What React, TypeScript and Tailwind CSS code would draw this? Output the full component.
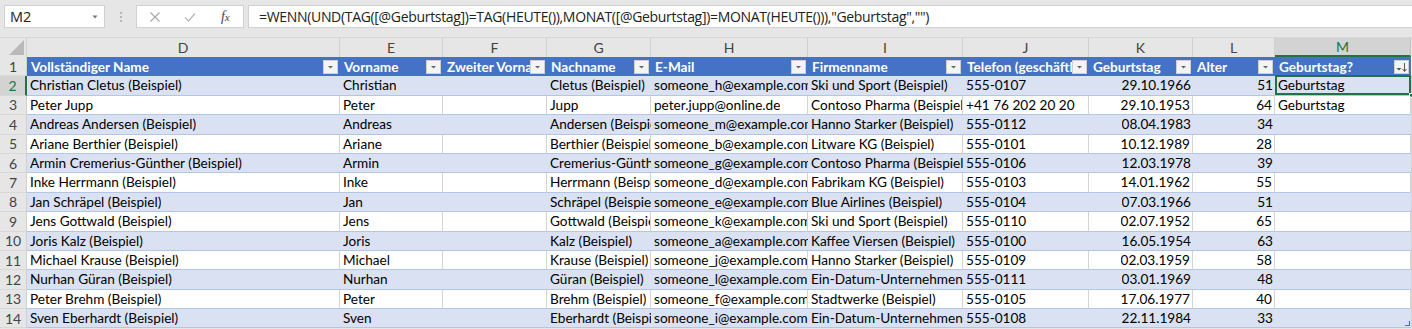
import React from "react";

type Col = { key: string; w: string; align: "l" | "r" };

const cols: Col[] = [
  { key: "D", w: "w-[313px]", align: "l" },
  { key: "E", w: "w-[103px]", align: "l" },
  { key: "F", w: "w-[104px]", align: "l" },
  { key: "G", w: "w-[104px]", align: "l" },
  { key: "H", w: "w-[157px]", align: "l" },
  { key: "I", w: "w-[155px]", align: "l" },
  { key: "J", w: "w-[126px]", align: "l" },
  { key: "K", w: "w-[104px]", align: "r" },
  { key: "L", w: "w-[82px]", align: "r" },
  { key: "M", w: "w-[136px]", align: "l" },
];

const headers = [
  "Vollständiger Name",
  "Vorname",
  "Zweiter Vorname",
  "Nachname",
  "E-Mail",
  "Firmenname",
  "Telefon (geschäftlich)",
  "Geburtstag",
  "Alter",
  "Geburtstag?",
];

const rows: string[][] = [
  ["Christian Cletus (Beispiel)", "Christian", "", "Cletus (Beispiel)", "someone_h@example.com", "Ski und Sport (Beispiel)", "555-0107", "29.10.1966", "51", "Geburtstag"],
  ["Peter Jupp", "Peter", "", "Jupp", "peter.jupp@online.de", "Contoso Pharma (Beispiel)", "+41 76 202 20 20", "29.10.1953", "64", "Geburtstag"],
  ["Andreas Andersen (Beispiel)", "Andreas", "", "Andersen (Beispiel)", "someone_m@example.com", "Hanno Starker (Beispiel)", "555-0112", "08.04.1983", "34", ""],
  ["Ariane Berthier (Beispiel)", "Ariane", "", "Berthier (Beispiel)", "someone_b@example.com", "Litware KG (Beispiel)", "555-0101", "10.12.1989", "28", ""],
  ["Armin Cremerius-Günther (Beispiel)", "Armin", "", "Cremerius-Günther (Beispiel)", "someone_g@example.com", "Contoso Pharma (Beispiel)", "555-0106", "12.03.1978", "39", ""],
  ["Inke Herrmann (Beispiel)", "Inke", "", "Herrmann (Beispiel)", "someone_d@example.com", "Fabrikam KG (Beispiel)", "555-0103", "14.01.1962", "55", ""],
  ["Jan Schräpel (Beispiel)", "Jan", "", "Schräpel (Beispiel)", "someone_e@example.com", "Blue Airlines (Beispiel)", "555-0104", "07.03.1966", "51", ""],
  ["Jens Gottwald (Beispiel)", "Jens", "", "Gottwald (Beispiel)", "someone_k@example.com", "Ski und Sport (Beispiel)", "555-0110", "02.07.1952", "65", ""],
  ["Joris Kalz (Beispiel)", "Joris", "", "Kalz (Beispiel)", "someone_a@example.com", "Kaffee Viersen (Beispiel)", "555-0100", "16.05.1954", "63", ""],
  ["Michael Krause (Beispiel)", "Michael", "", "Krause (Beispiel)", "someone_j@example.com", "Hanno Starker (Beispiel)", "555-0109", "02.03.1959", "58", ""],
  ["Nurhan Güran (Beispiel)", "Nurhan", "", "Güran (Beispiel)", "someone_l@example.com", "Ein-Datum-Unternehmen (Beispiel)", "555-0111", "03.01.1969", "48", ""],
  ["Peter Brehm (Beispiel)", "Peter", "", "Brehm (Beispiel)", "someone_f@example.com", "Stadtwerke (Beispiel)", "555-0105", "17.06.1977", "40", ""],
  ["Sven Eberhardt (Beispiel)", "Sven", "", "Eberhardt (Beispiel)", "someone_i@example.com", "Ein-Datum-Unternehmen (Beispiel)", "555-0108", "22.11.1984", "33", ""],
];

function FilterButton({ sorted }: { sorted?: boolean }) {
  return (
    <div className="w-[15px] h-[14px] shrink-0 mr-[2px] bg-[#f4f4f4] border border-[#cfcfcf] flex items-center justify-center">
      {sorted ? (
        <svg width="13" height="12" viewBox="0 0 13 12">
          <path d="M1.5 7 L6.5 7 L4 9.5 Z" fill="#555" />
          <path d="M9.5 2 L9.5 10" stroke="#555" strokeWidth="1" />
          <path d="M7.5 8 L9.5 10.5 L11.5 8" stroke="#555" strokeWidth="1" fill="none" />
        </svg>
      ) : (
        <svg width="9" height="6" viewBox="0 0 9 6">
          <path d="M2 2 L7 2 L4.5 4.5 Z" fill="#666" />
        </svg>
      )}
    </div>
  );
}

function FormulaBar() {
  return (
    <div className="h-[37px] flex items-start pt-[5px] pl-[4px] bg-[#e6e6e6]">
      <div className="w-[101px] h-[23px] bg-white border border-[#d0d0d0] flex items-center justify-between pl-[5px] pr-[6px]">
        <span className="text-[14.5px] text-[#222] font-['Open_Sans',sans-serif]">M2</span>
        <svg width="6" height="4" viewBox="0 0 6 4">
          <path d="M0.5 0.5 L5.5 0.5 L3 3.5 Z" fill="#777" />
        </svg>
      </div>
      <div className="w-[31px] h-[23px] flex flex-col items-center justify-center gap-[2px]">
        <div className="w-[2px] h-[2px] bg-[#b8b8b8]" />
        <div className="w-[2px] h-[2px] bg-[#b8b8b8]" />
        <div className="w-[2px] h-[2px] bg-[#b8b8b8]" />
      </div>
      <div className="w-[108px] h-[23px] bg-white border border-[#d0d0d0] flex items-center">
        <div className="w-[36px] flex justify-center">
          <svg width="12" height="12" viewBox="0 0 12 12">
            <path d="M1.5 1.5 L10.5 10.5 M10.5 1.5 L1.5 10.5" stroke="#a6a6a6" strokeWidth="1.1" />
          </svg>
        </div>
        <div className="w-[36px] flex justify-center">
          <svg width="12" height="12" viewBox="0 0 12 12">
            <path d="M1 6.5 L4.5 10 L11 2.5" stroke="#b8b8b8" strokeWidth="1.2" fill="none" />
          </svg>
        </div>
        <div className="w-[36px] flex justify-center">
          <span className="text-[14px] italic text-[#444] font-['Liberation_Serif',serif] leading-none">
            f<span className="text-[11px]">x</span>
          </span>
        </div>
      </div>
      <div className="ml-[4px] flex-1 h-[23px] bg-white border border-[#d0d0d0] border-r-0 flex items-center pl-[10px]">
        <span className="text-[14px] tracking-[-0.32px] text-[#222] font-['Open_Sans',sans-serif] whitespace-nowrap">
          =WENN(UND(TAG([@Geburtstag])=TAG(HEUTE()),MONAT([@Geburtstag])=MONAT(HEUTE())),"Geburtstag","")
        </span>
      </div>
    </div>
  );
}

function ColumnHeaders() {
  return (
    <div className="flex h-[20px] bg-[#e6e6e6] border-t border-[#d8d8d8]">
      <div className="w-[27px] shrink-0 border-r border-[#d0d0d0] relative flex items-end justify-end pr-[2px] pb-[2px]">
        <svg width="15" height="15" viewBox="0 0 15 15">
          <path d="M15 0 L15 15 L0 15 Z" fill="#b9b9b9" />
        </svg>
      </div>
      {cols.map((c) => {
        const sel = c.key === "M";
        return (
          <div
            key={c.key}
            className={`${c.w} shrink-0 flex items-center justify-center text-[14px] ${
              sel
                ? "bg-[#d3d3d3] text-[#217346] border-b-2 border-[#217346] border-r border-r-[#c0c0c0]"
                : "text-[#444] border-r border-[#d0d0d0]"
            }`}
          >
            {c.key}
          </div>
        );
      })}
      <div className="w-[40px] shrink-0" />
    </div>
  );
}

function RowHeader({ n, sel }: { n: number; sel?: boolean }) {
  return (
    <div
      className={`w-[27px] shrink-0 flex items-center justify-center text-[14px] border-b border-[#d8d8d8] ${
        sel
          ? "bg-[#d3d3d3] text-[#217346] border-r-2 border-r-[#217346]"
          : "bg-[#e6e6e6] text-[#444] border-r border-r-[#d0d0d0]"
      }`}
    >
      {n}
    </div>
  );
}

export default function App() {
  return (
    <div className="w-[1412px] h-[329px] overflow-hidden bg-[#e6e6e6] font-['Lato','Carlito',sans-serif]">
      <FormulaBar />
      <ColumnHeaders />
      {/* header row */}
      <div className="flex h-[19.4px]">
        <RowHeader n={1} />
        {cols.map((c, i) => (
          <div key={c.key} className={`${c.w} shrink-0 bg-[#4472c4] flex items-center`}>
            <div className="flex-1 min-w-0 overflow-hidden whitespace-nowrap text-white font-bold text-[13.6px] pl-[4px]">
              {headers[i]}
            </div>
            <FilterButton sorted={c.key === "M"} />
          </div>
        ))}
        <div className="w-[40px] shrink-0 bg-white border-b border-[#e0e0e0]" />
      </div>
      {rows.map((r, ri) => {
        const banded = ri % 2 === 0;
        const last = ri === rows.length - 1;
        return (
          <div key={ri} className="flex h-[19.4px]">
            <RowHeader n={ri + 2} sel={ri === 0} />
            {cols.map((c, ci) => {
              const selCell = ri === 0 && c.key === "M";
              return (
                <div
                  key={c.key}
                  className={`${c.w} shrink-0 relative flex items-center overflow-visible whitespace-nowrap text-[13.6px] text-black border-b border-[#b4c6e7] ${
                    banded ? "bg-[#d9e1f2]" : "bg-white border-r border-r-[#d4d4d4]"
                  } ${c.align === "r" ? "justify-end pr-[2px]" : "pl-[3px]"}`}
                >
                  <span className="block overflow-hidden">{r[ci]}</span>
                  {selCell && (
                    <>
                      <div className="absolute inset-0 -top-[1px] border-2 border-[#217346] pointer-events-none" />
                      <div className="absolute -right-[3px] -bottom-[3px] w-[5px] h-[5px] bg-[#217346] border border-white" />
                    </>
                  )}
                  {last && c.key === "M" && (
                    <svg className="absolute right-[1px] bottom-[1px]" width="5" height="5" viewBox="0 0 5 5">
                      <path d="M4.5 0 L4.5 4.5 L0 4.5" stroke="#4472c4" strokeWidth="1.2" fill="none" />
                    </svg>
                  )}
                </div>
              );
            })}
            <div className="w-[40px] shrink-0 bg-white border-b border-[#e0e0e0] border-l border-l-[#d4d4d4]" />
          </div>
        );
      })}
    </div>
  );
}
